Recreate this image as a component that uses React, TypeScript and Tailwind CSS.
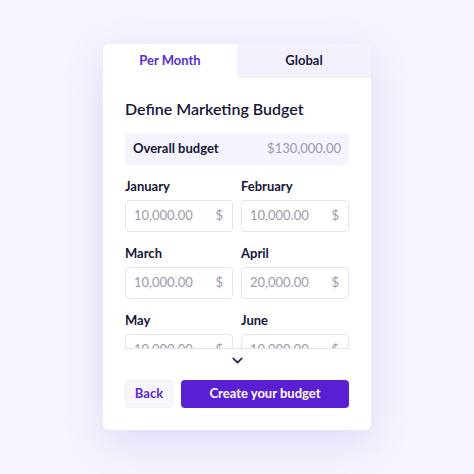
import { ChevronDown } from "lucide-react";

const months = [
  { name: "January", value: "10,000.00" },
  { name: "February", value: "10,000.00" },
  { name: "March", value: "10,000.00" },
  { name: "April", value: "20,000.00" },
  { name: "May", value: "10,000.00" },
  { name: "June", value: "10,000.00" },
];

function MonthField({ name, value }: { name: string; value: string }) {
  return (
    <div className="flex flex-col">
      <label className="text-[13px] leading-4 font-bold text-[#17163a]">{name}</label>
      <div className="mt-[6px] h-8 rounded-[4px] border border-[#e4e3ec] bg-white flex items-center justify-between pl-[8px] pr-[9px] text-[13px] text-[#9a9aab]">
        <span>{value}</span>
        <span>$</span>
      </div>
    </div>
  );
}

export default function App() {
  return (
    <div
      className="w-[474px] h-[474px] bg-[#f6f4fd] flex items-center justify-center"
      style={{ fontFamily: "Lato, 'Noto Sans', sans-serif" }}
    >
      <div className="w-[268px] h-[386px] bg-white rounded-[6px] shadow-[0_12px_40px_rgba(110,80,230,0.16)] flex flex-col overflow-hidden">
        <div className="flex h-[34px]">
          <div className="flex-1 flex items-center justify-center text-[13px] font-bold text-[#5b2bd2] bg-white">
            Per Month
          </div>
          <div className="flex-1 flex items-center justify-center text-[13px] font-bold text-[#17163a] bg-[#f3f1fc]">
            Global
          </div>
        </div>
        <div className="flex flex-col px-[22px] pt-[20px] pb-[22px] flex-1">
          <h1 className="text-[16px] leading-[22px] font-semibold text-[#17163a]">
            Define Marketing Budget
          </h1>
          <div className="mt-[13px] h-8 rounded-[4px] bg-[#f5f3fd] flex items-center justify-between px-[8px] text-[13px]">
            <span className="font-bold text-[#17163a]">Overall budget</span>
            <span className="text-[#9a9aab]">$130,000.00</span>
          </div>
          <div className="mt-[13px] h-[171px] overflow-hidden border-b border-[#e2e1ea]">
            <div className="grid grid-cols-2 gap-x-2 gap-y-[13px]">
              {months.map((m) => (
                <MonthField key={m.name} name={m.name} value={m.value} />
              ))}
            </div>
          </div>
          <div className="flex justify-center mt-[3px] text-[#2b2a45]">
            <ChevronDown size={17} strokeWidth={2.5} />
          </div>
          <div className="flex gap-2 mt-auto">
            <button className="w-[48px] h-[28px] rounded-[4px] bg-[#f7f6fb] border border-[#efeef5] text-[13px] font-bold text-[#5b2bd2]">
              Back
            </button>
            <button className="flex-1 h-[28px] rounded-[4px] bg-[#5a1fd3] text-[13px] font-bold text-white">
              Create your budget
            </button>
          </div>
        </div>
      </div>
    </div>
  );
}
